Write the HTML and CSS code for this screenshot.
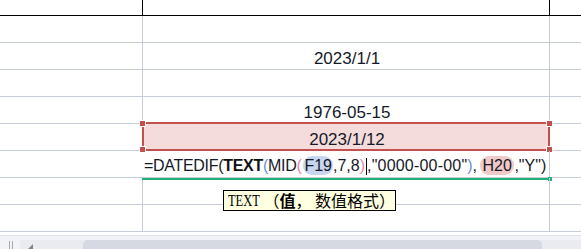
FILE: index.html
```html
<!DOCTYPE html>
<html>
<head>
<meta charset="utf-8">
<link rel="stylesheet" href="styles.css">
</head>
<body>
<div class="sheet">
  <div class="row header"><div class="c a"></div><div class="c b"></div><div class="c cc"></div></div>
  <div class="row"><div class="c a"></div><div class="c b"></div><div class="c cc"></div></div>
  <div class="row"><div class="c a"></div><div class="c b val">2023/1/1</div><div class="c cc"></div></div>
  <div class="row"><div class="c a"></div><div class="c b"></div><div class="c cc"></div></div>
  <div class="row"><div class="c a"></div><div class="c b val">1976-05-15</div><div class="c cc"></div></div>
  <div class="row"><div class="c a"></div><div class="c b val sel"><div class="selbox"><i class="h tl"></i><i class="h tr"></i><i class="h bl"></i><i class="h br"></i></div><span class="v">2023/1/12</span></div><div class="c cc"></div></div>
  <div class="row editing"><div class="c a"></div><div class="c b formula"><span class="ftext"><span class="pre">=DATEDIF(<b>TEXT</b><span class="pb">(</span>MID<span class="pr">(</span></span><span class="ref rb">F19</span>,7,8<span class="pr">)</span><span class="caret"></span><span class="mid">,"0000-00-00"</span><span class="pb">)</span>,<span class="ref rr">H20</span>,"Y")</span><div class="green"><i></i></div><div class="tip"><span class="lat">TEXT</span><span class="sp"> </span><span class="cjk">（<b>值</b>，</span><span class="sp"> </span><span class="cjk">数值格式）</span></div></div><div class="c cc"></div></div>
  <div class="row"><div class="c a"></div><div class="c b"></div><div class="c cc"></div></div>
  <div class="row"><div class="c a"></div><div class="c b"></div><div class="c cc"></div></div>
  <div class="hscroll">
    <div class="split"><span></span><span></span></div>
    <div class="track">
      <svg class="arrow" width="8" height="9" viewBox="0 0 8 9"><path d="M1 6 L6 1 L6 11 Z" fill="#80858e"/></svg>
      <div class="thumb"></div>
    </div>
  </div>
</div>
</body>
</html>
```
FILE: styles.css
```css
* { box-sizing: border-box; }
html, body { margin: 0; padding: 0; background: #fff; }
body { width: 581px; height: 249px; overflow: hidden; font-family: "Liberation Sans", Arial, sans-serif; color: #161a28; }
.sheet { width: 581px; height: 249px; display: flex; flex-direction: column; }
.row { display: flex; height: 27px; border-bottom: 1px solid #c7ccd9; flex: none; }
.row.header { height: 16px; border-bottom-color: #000; }
.c { height: 100%; }
.a { width: 143px; border-right: 1px solid #c7ccd9; flex: none; }
.b { width: 407px; border-right: 1px solid #c7ccd9; flex: none; position: relative; }
.cc { flex: 1; }
.header .a, .header .b { border-right-color: #000; }
.editing .a { border-right-color: transparent; }

.val { display: flex; align-items: flex-end; justify-content: center; font-size: 17px; line-height: 17px; padding-bottom: 2px; padding-left: 2px; }
.sel .v { position: relative; }
.selbox { position: absolute; left: -1px; top: -2px; width: 408px; height: 29px; border: 2px solid #c4504e; background: #f3dcdb; }
.h { position: absolute; width: 7px; height: 7px; background: #c4504e; border: 1px solid #fff; }
.tl { left: -5px; top: -4px; }
.tr { right: -5px; top: -4px; }
.bl { left: -5px; bottom: -4px; }
.br { right: -5px; bottom: -4px; }

.formula { display: flex; align-items: flex-end; padding-left: 1px; padding-bottom: 2px; font-size: 16px; line-height: 17px; white-space: nowrap; }
.pre { letter-spacing: -0.3px; }
.mid { letter-spacing: 0.2px; }
.ftext b { font-weight: bold; color: #111; }
.pb { color: #6b8fdc; }
.pr { color: #e38a9f; }
.ref { border-radius: 9px; padding-top: 1px; padding-bottom: 1px; }
.rb { background: #c8d6ef; margin-left: 2px; padding-left: 1px; padding-right: 1px; }
.rr { background: #f0c9c9; margin-left: 3px; padding-left: 2.5px; padding-right: 2.5px; }
.caret { display: inline-block; width: 1px; height: 17px; background: #000; vertical-align: -4px; margin-left: 1px; }
.green { position: absolute; left: -1px; bottom: -3px; width: 408px; height: 2px; background: #22ae7a; }
.green i { position: absolute; right: -2px; top: -1px; width: 4px; height: 4px; background: #22ae7a; }

.tip { position: absolute; left: 80px; top: 39px; width: 173px; height: 21px; background: #ffffe1; border: 1px solid #000; padding-left: 4px; display: flex; align-items: center; white-space: nowrap; color: #000; z-index: 2; }
.tip .lat { display: inline-block; font-family: "Liberation Serif", "Times New Roman", serif; font-size: 16px; line-height: 19px; transform: scaleX(0.78); transform-origin: left center; margin-right: -9px; }
.tip .sp { display: inline-block; width: 8px; }
.tip .cjk { font-family: "Noto Sans CJK SC", sans-serif; font-size: 16px; line-height: 19px; }
.tip .cjk b { font-weight: bold; }

.hscroll { margin-top: 3px; border-top: 1px solid #dfe2e8; flex: 1; background: #f2f3f6; position: relative; display: flex; }
.split { width: 20px; display: flex; gap: 2px; padding-left: 9px; padding-top: 5px; flex: none; }
.split span { width: 1px; height: 100%; background: #a3a8b1; }
.track { flex: 1; margin-top: 4px; background: #e9ebf0; display: flex; position: relative; }
.arrow { position: absolute; left: 7px; top: 3px; }
.thumb { margin-left: 63px; width: 459px; background: #d6d9e2; border-radius: 5px 5px 0 0; }
```
